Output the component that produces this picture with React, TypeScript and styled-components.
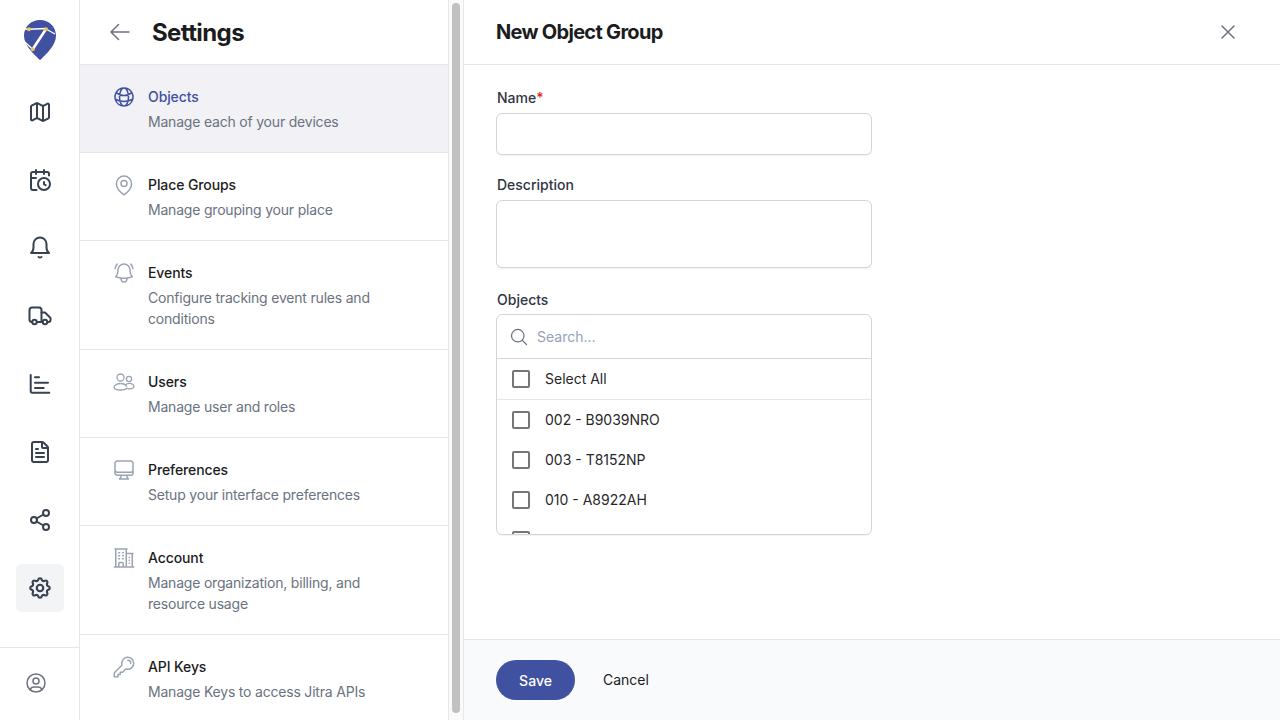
import * as React from "react"
import styled, { createGlobalStyle } from "styled-components"
import { Map as MapIcon, CalendarClock, Share2, FileText } from "lucide-react"
import { TbSettings, TbUserCircle } from "react-icons/tb"
import {
  HiOutlineArrowLeft,
  HiOutlineBellAlert,
  HiOutlineBuildingOffice2,
  HiOutlineComputerDesktop,
  HiOutlineGlobeAlt,
  HiOutlineKey,
  HiOutlineMagnifyingGlass,
  HiOutlineMapPin,
  HiOutlineXMark,
} from "react-icons/hi2"

const colors = {
  brand: "#3f51a0",
  ink: "#1c1c1e",
  label: "#2f3542",
  muted: "#6b7280",
  icon: "#9aa3b2",
  rail: "#374151",
  line: "#e5e7eb",
  field: "#d1d5db",
}

const GlobalStyle = createGlobalStyle`
  html, body {
    margin: 0;
    height: 100%;
    overflow: hidden;
    background: #fff;
    font-family: Inter, "Liberation Sans", sans-serif;
    -webkit-font-smoothing: antialiased;
  }
  * { box-sizing: border-box; }
`

const Shell = styled.div`
  display: flex;
  width: 1280px;
  height: 720px;
`

// Icon rail
const Rail = styled.nav`
  flex: 0 0 80px;
  display: flex;
  flex-direction: column;
  align-items: center;
  border-right: 1px solid ${colors.line};
`

const LogoWrap = styled.div`
  height: 40px;
  margin: 20px 0 28px;
`

const RailItems = styled.div`
  display: flex;
  flex-direction: column;
  gap: 20px;
`

const RailButton = styled.div<{ $active?: boolean }>`
  width: 48px;
  height: 48px;
  display: flex;
  align-items: center;
  justify-content: center;
  border-radius: 6px;
  color: ${colors.rail};
  background: ${(p) => (p.$active ? "#f3f4f6" : "transparent")};
`

const RailFooter = styled.div`
  margin-top: auto;
  width: 100%;
  height: 73px;
  display: flex;
  align-items: center;
  justify-content: center;
  padding: 0 8px 2px 0;
  border-top: 1px solid ${colors.line};
  color: ${colors.muted};
`

// Settings list
const SettingsPanel = styled.aside`
  flex: 0 0 369px;
  height: 720px;
  overflow: hidden;
  border-right: 1px solid ${colors.line};
`

const ScrollTrack = styled.div`
  flex: 0 0 15px;
  display: flex;
  padding: 3px 3px 7px 3px;
  background: #fafafa;
  border-right: 1px solid #e8e8e8;
`

const ScrollThumb = styled.div`
  flex: 1;
  border-radius: 4px;
  background: #c1c1c1;
`

const PanelHeader = styled.header`
  height: 65px;
  display: flex;
  align-items: center;
  gap: 20px;
  padding-left: 28px;
  border-bottom: 1px solid ${colors.line};
  color: ${colors.muted};
`

const PanelTitle = styled.h1`
  margin: 0;
  font-size: 24px;
  font-weight: 700;
  letter-spacing: -0.6px;
  color: ${colors.ink};
`

const MenuRow = styled.div<{ $active?: boolean }>`
  display: flex;
  gap: 12px;
  padding: 20px 30px 20px 32px;
  border-bottom: 1px solid ${colors.line};
  background: ${(p) => (p.$active ? "#f1f1f6" : "#fff")};
  color: ${(p) => (p.$active ? colors.brand : colors.icon)};
  &:last-child {
    border-bottom: none;
  }
`

const MenuIcon = styled.div`
  flex: 0 0 24px;
  height: 24px;
`

const MenuText = styled.div`
  display: flex;
  flex-direction: column;
  gap: 4px;
  padding-top: 2px;
`

const MenuTitle = styled.div<{ $active?: boolean }>`
  font-size: 14px;
  line-height: 20px;
  font-weight: 500;
  letter-spacing: -0.1px;
  color: ${(p) => (p.$active ? colors.brand : colors.ink)};
`

const MenuDescription = styled.div`
  font-size: 14px;
  line-height: 21px;
  letter-spacing: -0.2px;
  color: ${colors.muted};
`

// Form
const Content = styled.main`
  flex: 1;
  display: flex;
  flex-direction: column;
  height: 720px;
`

const ContentHeader = styled.header`
  flex: 0 0 65px;
  display: flex;
  align-items: center;
  justify-content: space-between;
  padding: 0 40px 0 32px;
  border-bottom: 1px solid ${colors.line};
  color: ${colors.muted};
`

const ContentTitle = styled.h2`
  margin: 0;
  font-size: 20px;
  font-weight: 700;
  letter-spacing: -0.7px;
  color: ${colors.ink};
`

const Form = styled.form`
  flex: 1;
  width: 440px;
  padding: 23px 32px 0;
`

const Field = styled.div`
  margin-bottom: 20px;
`

const Label = styled.label<{ $tight?: boolean }>`
  display: block;
  padding-left: 1px;
  margin-bottom: ${(p) => (p.$tight ? "4px" : "5px")};
  font-size: 14px;
  line-height: 20px;
  font-weight: 500;
  color: ${colors.label};
`

const Required = styled.span`
  color: #dc2626;
`

const TextInput = styled.input`
  display: block;
  width: 100%;
  height: 42px;
  border: 1px solid ${colors.field};
  border-radius: 6px;
  box-shadow: 0 1px 1px rgba(0, 0, 0, 0.05);
  background: #fff;
`

const TextArea = styled.textarea`
  display: block;
  width: 100%;
  height: 68px;
  margin-bottom: 22px;
  border: 1px solid ${colors.field};
  border-radius: 6px;
  box-shadow: 0 1px 1px rgba(0, 0, 0, 0.05);
  background: #fff;
  resize: none;
`

const ObjectBox = styled.div`
  height: 221px;
  overflow: hidden;
  border: 1px solid ${colors.field};
  border-radius: 6px;
  box-shadow: 0 1px 1px rgba(0, 0, 0, 0.05);
`

const SearchRow = styled.div`
  height: 44px;
  display: flex;
  align-items: center;
  gap: 8px;
  padding-left: 12px;
  border-bottom: 1px solid ${colors.field};
  color: ${colors.muted};
`

const SearchInput = styled.input`
  flex: 1;
  border: none;
  outline: none;
  padding: 0;
  font-family: inherit;
  font-size: 14px;
  &::placeholder {
    color: #94a3b8;
    opacity: 1;
  }
`

const OptionRow = styled.div<{ $header?: boolean }>`
  height: ${(p) => (p.$header ? "41px" : "40px")};
  display: flex;
  align-items: center;
  gap: 15px;
  padding-left: 15px;
  font-size: 14px;
  line-height: 18px;
  color: #27272a;
  border-bottom: ${(p) => (p.$header ? `1px solid ${colors.line}` : "none")};
`

const CheckBox = styled.input`
  appearance: none;
  flex: 0 0 18px;
  width: 18px;
  height: 18px;
  margin: 0;
  border: 2px solid #767676;
  border-radius: 2px;
  background: #fff;
`

const Footer = styled.footer`
  flex: 0 0 81px;
  display: flex;
  align-items: center;
  gap: 28px;
  padding-left: 32px;
  border-top: 1px solid ${colors.line};
  background: #f9fafb;
`

const SaveButton = styled.button`
  width: 79px;
  height: 40px;
  border: none;
  border-radius: 20px;
  background: ${colors.brand};
  color: #fff;
  font-family: inherit;
  font-size: 14px;
  font-weight: 500;
`

const CancelButton = styled.button`
  border: none;
  padding: 0 0 2px;
  background: none;
  color: ${colors.ink};
  font-family: inherit;
  font-size: 14px;
  font-weight: 400;
`

const Logo = () => (
  <svg width="32" height="40" viewBox="0 0 32 40">
    <path
      d="M16 0C7 0 0 6.800 0 15.600 0 25 8.500 33 15.200 39.400c.5.500 1.200.500 1.700 0C23.500 33 32 25 32 15.600 32 6.800 25 0 16 0z"
      fill={colors.brand}
    />
    <path d="M0.500 9L5 9.300 22 8.500M22 9L31 14M8.700 29.300L0.800 22" fill="none" stroke="#fff" strokeWidth="1.400" />
    <path d="M22 9L8.700 29.300" fill="none" stroke="#fff" strokeWidth="2.600" />
    <circle cx="5" cy="9.300" r="2" fill="#ecc75a" />
    <circle cx="22" cy="9.300" r="2" fill="#ecc75a" />
    <circle cx="8.700" cy="29.300" r="2" fill="#ecc75a" />
  </svg>
)

const BellIcon = () => (
  <svg width="24" height="24" viewBox="0 0 24 24" fill="none" stroke="currentColor" strokeWidth="2" strokeLinecap="round" strokeLinejoin="round">
    <path d="M3 17h18c-1.600-1.200-2.500-3-2.500-5.500V8a6.500 6.500 0 0 0-13 0v3.500C5.500 14 4.600 15.800 3 17z" />
    <path d="M10.500 21c.9.500 2.100.500 3 0" />
  </svg>
)

const TruckIcon = () => (
  <svg width="24" height="24" viewBox="0 0 24 24" fill="none" stroke="currentColor" strokeWidth="2" strokeLinecap="round" strokeLinejoin="round">
    <path d="M4 18c-1.500 0-2.500-1-2.500-2.500V6c0-1.500 1-2.500 2.500-2.500h7c1.500 0 2.500 1 2.500 2.500v12h-4" />
    <path d="M13.500 8.500H17l5.500 5.500v2c0 1.200-.8 2-2 2H20" />
    <circle cx="6.500" cy="18" r="2.200" />
    <circle cx="17" cy="18" r="2.200" />
  </svg>
)

const ChartIcon = () => (
  <svg width="24" height="24" viewBox="0 0 24 24" fill="none" stroke="currentColor" strokeWidth="2" strokeLinecap="round" strokeLinejoin="round">
    <path d="M2.700 3v16c0 1.100.6 1.700 1.700 1.700h16.900" />
    <path d="M7 5.300h4M7 10.700h13M7 16h8.700" />
  </svg>
)

const UsersIcon = () => (
  <svg width="24" height="24" viewBox="0 0 24 24" fill="none" stroke="currentColor" strokeWidth="1.300">
    <circle cx="8.500" cy="7.500" r="3.500" />
    <circle cx="17" cy="9" r="2.600" />
    <path d="M8.500 13.500c-3.500 0-6.500 2-6.500 3.700s3 2.800 6.500 2.800 6-1 7-2.400" />
    <path d="M13.500 14.800c1-1 2.300-1.500 3.800-1.500 2.600 0 4.700 1.500 4.700 3s-2 2.500-4.700 2.500c-.7 0-1.300 0-1.800-.2" />
    <path d="M8.500 13.500c2.800 0 5.400 1.500 6.300 3" />
  </svg>
)

const menu = [
  { title: "Objects", text: "Manage each of your devices", icon: <HiOutlineGlobeAlt size={24} />, active: true },
  { title: "Place Groups", text: "Manage grouping your place", icon: <HiOutlineMapPin size={24} /> },
  { title: "Events", text: "Configure tracking event rules and conditions", icon: <HiOutlineBellAlert size={24} /> },
  { title: "Users", text: "Manage user and roles", icon: <UsersIcon /> },
  { title: "Preferences", text: "Setup your interface preferences", icon: <HiOutlineComputerDesktop size={24} /> },
  { title: "Account", text: "Manage organization, billing, and resource usage", icon: <HiOutlineBuildingOffice2 size={24} /> },
  { title: "API Keys", text: "Manage Keys to access Jitra APIs", icon: <HiOutlineKey size={24} /> },
]

const objects = ["002 - B9039NRO", "003 - T8152NP", "010 - A8922AH", ""]

export default function App() {
  return (
    <Shell>
      <GlobalStyle />
      <Rail>
        <LogoWrap>
          <Logo />
        </LogoWrap>
        <RailItems>
          <RailButton><MapIcon size={24} /></RailButton>
          <RailButton><CalendarClock size={24} /></RailButton>
          <RailButton><BellIcon /></RailButton>
          <RailButton><TruckIcon /></RailButton>
          <RailButton><ChartIcon /></RailButton>
          <RailButton><FileText size={24} /></RailButton>
          <RailButton><Share2 size={24} /></RailButton>
          <RailButton $active><TbSettings size={26} /></RailButton>
        </RailItems>
        <RailFooter>
          <TbUserCircle size={24} strokeWidth={1.5} />
        </RailFooter>
      </Rail>

      <SettingsPanel>
        <PanelHeader>
          <HiOutlineArrowLeft size={24} />
          <PanelTitle>Settings</PanelTitle>
        </PanelHeader>
        {menu.map((item) => (
          <MenuRow key={item.title} $active={item.active}>
            <MenuIcon>{item.icon}</MenuIcon>
            <MenuText>
              <MenuTitle $active={item.active}>{item.title}</MenuTitle>
              <MenuDescription>{item.text}</MenuDescription>
            </MenuText>
          </MenuRow>
        ))}
      </SettingsPanel>
      <ScrollTrack>
        <ScrollThumb />
      </ScrollTrack>

      <Content>
        <ContentHeader>
          <ContentTitle>New Object Group</ContentTitle>
          <HiOutlineXMark size={24} />
        </ContentHeader>
        <Form>
          <Field>
            <Label>Name<Required>*</Required></Label>
            <TextInput />
          </Field>
          <Field>
            <Label>Description</Label>
            <TextArea />
          </Field>
          <Label $tight>Objects</Label>
          <ObjectBox>
            <SearchRow>
              <HiOutlineMagnifyingGlass size={20} />
              <SearchInput placeholder="Search..." />
            </SearchRow>
            <OptionRow $header>
              <CheckBox type="checkbox" />
              <span>Select All</span>
            </OptionRow>
            {objects.map((name) => (
              <OptionRow key={name}>
                <CheckBox type="checkbox" />
                <span>{name}</span>
              </OptionRow>
            ))}
          </ObjectBox>
        </Form>
        <Footer>
          <SaveButton type="button">Save</SaveButton>
          <CancelButton type="button">Cancel</CancelButton>
        </Footer>
      </Content>
    </Shell>
  )
}
